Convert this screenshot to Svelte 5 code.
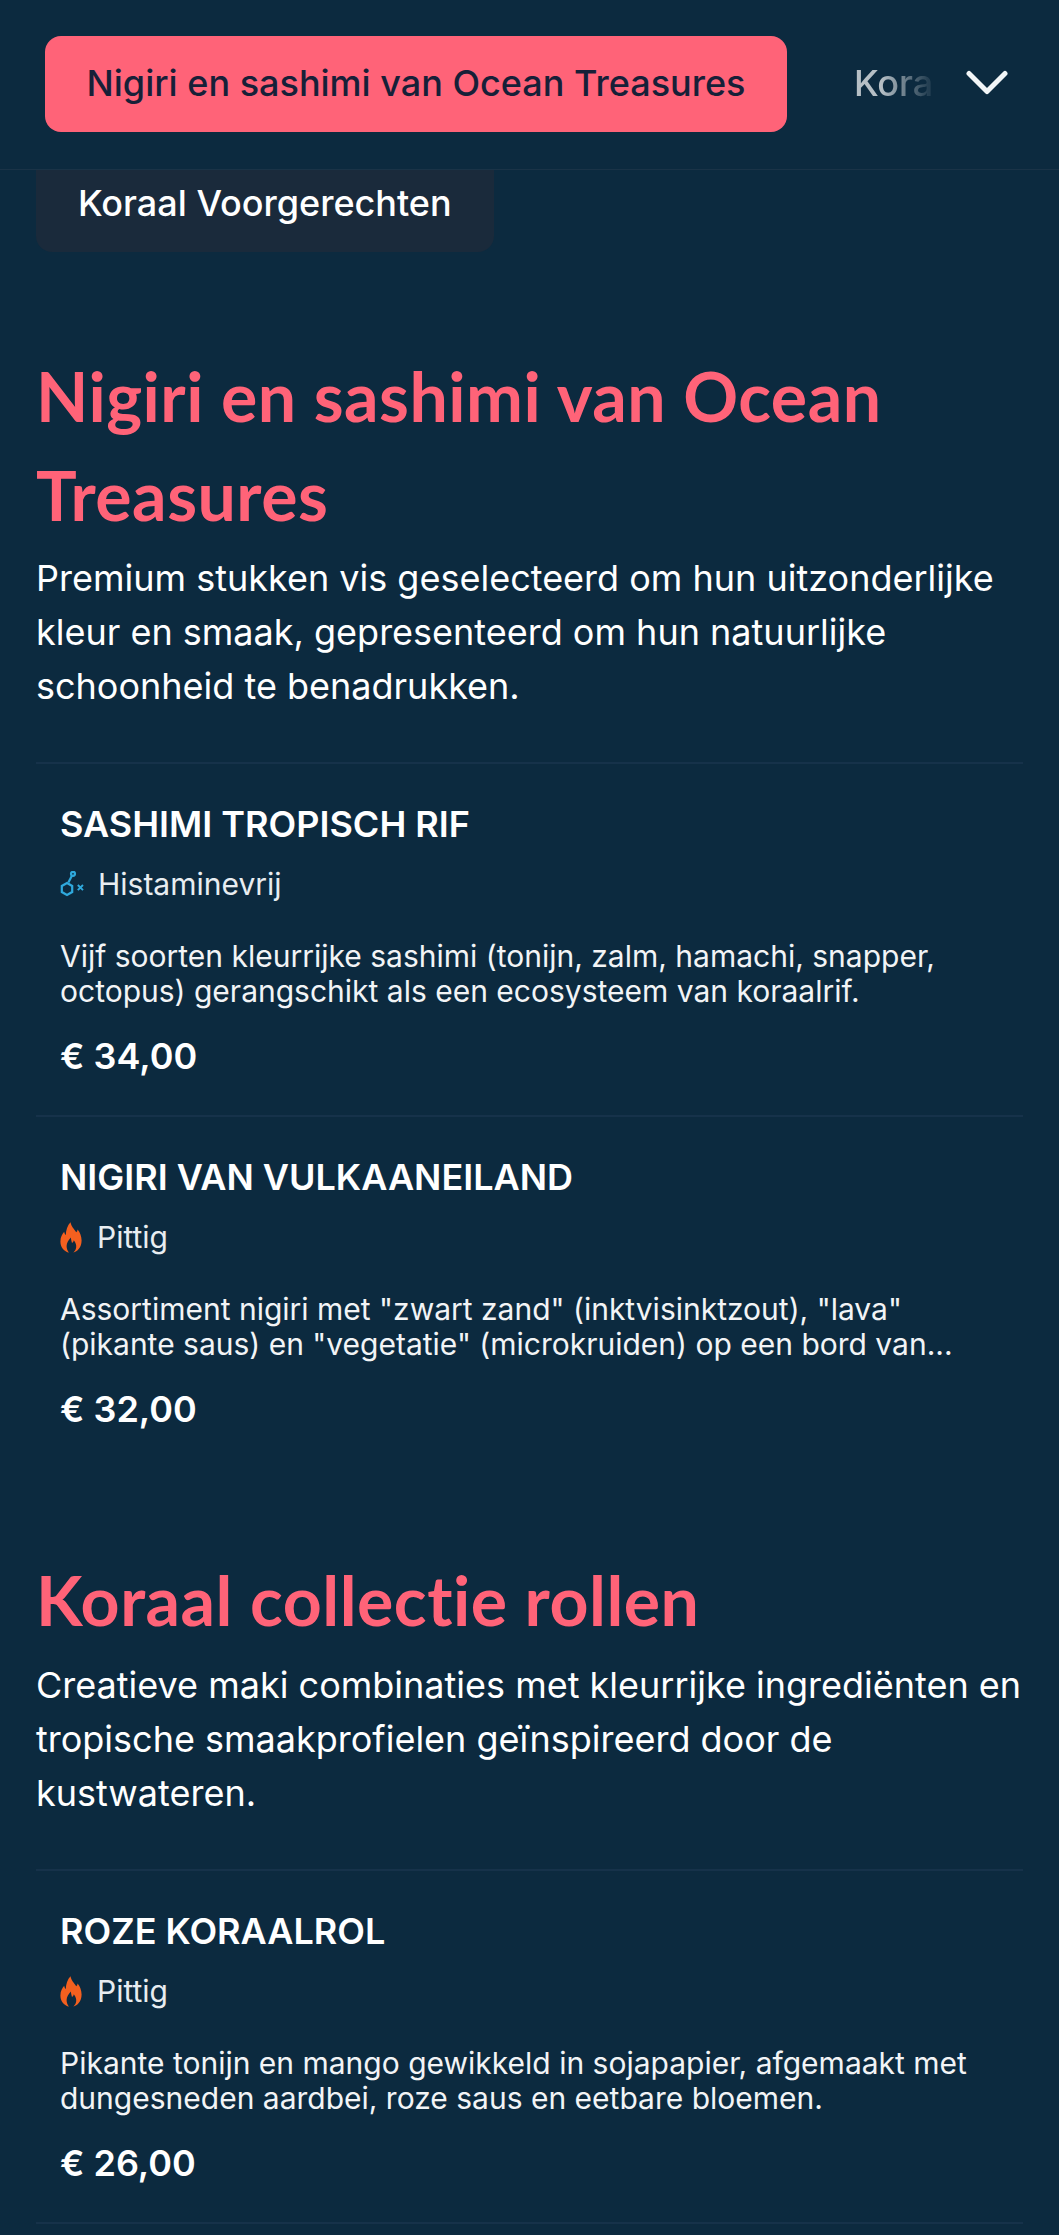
<script lang="ts">
  interface Dish {
    name: string;
    tag: 'spicy' | 'histamine';
    tagLabel: string;
    desc: string[];
    price: string;
    last?: boolean;
  }

  interface Section {
    title: string;
    intro: string[];
    dishes: Dish[];
  }

  const sections: Section[] = [
    {
      title: 'Nigiri en sashimi van Ocean Treasures',
      intro: [
        'Premium stukken vis geselecteerd om hun uitzonderlijke',
        'kleur en smaak, gepresenteerd om hun natuurlijke',
        'schoonheid te benadrukken.'
      ],
      dishes: [
        {
          name: 'SASHIMI TROPISCH RIF',
          tag: 'histamine',
          tagLabel: 'Histaminevrij',
          desc: [
            'Vijf soorten kleurrijke sashimi (tonijn, zalm, hamachi, snapper,',
            'octopus) gerangschikt als een ecosysteem van koraalrif.'
          ],
          price: '€ 34,00'
        },
        {
          name: 'NIGIRI VAN VULKAANEILAND',
          tag: 'spicy',
          tagLabel: 'Pittig',
          desc: [
            'Assortiment nigiri met "zwart zand" (inktvisinktzout), "lava"',
            '(pikante saus) en "vegetatie" (microkruiden) op een bord van...'
          ],
          price: '€ 32,00',
          last: true
        }
      ]
    },
    {
      title: 'Koraal collectie rollen',
      intro: [
        'Creatieve maki combinaties met kleurrijke ingrediënten en',
        'tropische smaakprofielen geïnspireerd door de',
        'kustwateren.'
      ],
      dishes: [
        {
          name: 'ROZE KORAALROL',
          tag: 'spicy',
          tagLabel: 'Pittig',
          desc: [
            'Pikante tonijn en mango gewikkeld in sojapapier, afgemaakt met',
            'dungesneden aardbei, roze saus en eetbare bloemen.'
          ],
          price: '€ 26,00'
        }
      ]
    }
  ];
</script>

<div class="page">
  <header class="tabs">
    <div class="tab active">Nigiri en sashimi van Ocean Treasures</div>
    <div class="tab next">Kora</div>
    <svg class="chevron" viewBox="0 0 42 25" width="42" height="25" fill="none" stroke="#f2f5f7" stroke-width="5" stroke-linecap="round" stroke-linejoin="round">
      <path d="M3 3.5 L21 21.5 L39 3.5" />
    </svg>
  </header>

  <div class="chip">Koraal Voorgerechten</div>

  {#each sections as section, i}
    <section class="section" class:first={i === 0}>
      <h2>{section.title}</h2>
      <p class="intro">
        {#each section.intro as line}<span>{line}</span>{/each}
      </p>
      <div class="dishes">
        {#each section.dishes as dish}
          <article class="dish" class:last={dish.last}>
            <h3>{dish.name}</h3>
            <div class="tag">
              {#if dish.tag === 'spicy'}
                <svg class="icon" viewBox="0 0 27 31" width="27" height="31">
                  <path fill="#f4601f" d="M10.5 0.3 C11.3 4.8 14.2 7 16.2 10.3 C17 9.6 17.5 8.6 17.6 7.4 C20 10.2 21.6 14 21.6 18.6 C21.6 25.6 17.2 29.8 13.4 30.6 C15.4 28.6 16.4 26.4 16.2 23.8 C16 21.4 15 19.8 13.8 18.2 C13.5 19.6 12.9 20.4 12 21 C11.4 18.6 11 16.8 10.8 15.4 C8.6 18 6.6 20.6 6.6 24 C6.6 26.6 7.4 28.8 9 30.6 C4.4 29.6 0.4 25.4 0.4 19.4 C0.4 15 2.4 12 4.2 9.8 C4.4 11.2 5 12.4 5.8 13 C5.8 8.2 7.6 3.4 10.5 0.3 Z" />
                </svg>
              {:else}
                <svg class="icon" viewBox="0 0 28 26" width="28" height="26" fill="none" stroke="#2fa9dd" stroke-width="2.2">
                  <circle cx="13" cy="2.8" r="2" />
                  <path d="M12 4.6 L8.4 11.4" />
                  <path d="M7 12 L12.2 15 L12.2 21 L7 24 L1.8 21 L1.8 15 Z" />
                  <path d="M17.8 14 L23 19.2 M23 14 L17.8 19.2" stroke-width="1.9" />
                </svg>
              {/if}
              <span>{dish.tagLabel}</span>
            </div>
            <p class="desc">
              {#each dish.desc as line}<span>{line}</span>{/each}
            </p>
            <div class="price">{dish.price}</div>
          </article>
        {/each}
      </div>
    </section>
  {/each}
</div>

<style>
  :global(body) {
    margin: 0;
    background: #0c2a3f;
  }

  .page {
    height: 2235px;
    overflow: hidden;
    background: #0c2a3f;
    color: #fff;
    font-family: Inter, "Liberation Sans", sans-serif;
  }

  .tabs {
    height: 169px;
    display: flex;
    align-items: center;
    padding: 0 45px;
    border-bottom: 1px solid #1a3347;
  }

  .tab {
    font-size: 36px;
    font-weight: 500;
    white-space: nowrap;
  }

  .tab.active {
    box-sizing: border-box;
    width: 742px;
    height: 96px;
    margin-top: -2px;
    line-height: 94px;
    text-align: center;
    background: #ff6378;
    color: #172038;
    border-radius: 16px;
  }

  .tab.next {
    width: 78px;
    margin-left: 67px;
    margin-top: -4px;
    overflow: hidden;
    -webkit-mask-image: linear-gradient(to right, rgba(0, 0, 0, 0.7) 35%, rgba(0, 0, 0, 0.1) 95%);
    mask-image: linear-gradient(to right, rgba(0, 0, 0, 0.7) 35%, rgba(0, 0, 0, 0.1) 95%);
  }

  .chevron {
    margin-left: 34px;
    margin-top: -4px;
  }

  .chip {
    box-sizing: border-box;
    width: 458px;
    height: 82px;
    margin-left: 36px;
    padding: 5px 0 0 42px;
    background: #1a2a3b;
    border-radius: 0 0 16px 16px;
    font-size: 36px;
    font-weight: 500;
    line-height: 56px;
  }

  .section {
    padding: 0 36px;
    margin-top: 88px;
  }

  .section.first {
    margin-top: 94px;
  }

  h2 {
    margin: 0;
    font-family: Lato, sans-serif;
    font-size: 68px;
    font-weight: 700;
    letter-spacing: 0.5px;
    line-height: 99px;
    color: #ff6378;
  }

  .intro {
    margin: 7px 0 0;
    font-size: 36px;
    line-height: 54px;
  }

  .section:not(.first) .intro {
    margin-top: 9px;
  }

  .intro span,
  .desc span {
    display: block;
    white-space: nowrap;
  }

  .dishes {
    margin-top: 49px;
    border-top: 2px solid #16324a;
  }

  .dish {
    height: 353px;
    box-sizing: border-box;
    padding: 35px 24px 0;
    border-bottom: 2px solid #16324a;
  }

  .dish.last {
    border-bottom: 0;
    height: 345px;
  }

  h3 {
    margin: 0;
    font-size: 36px;
    font-weight: 600;
    line-height: 50px;
  }

  .tag {
    display: flex;
    align-items: center;
    gap: 10px;
    height: 40px;
    margin-top: 15px;
    font-size: 30px;
    color: #e8edf1;
  }

  .icon {
    flex: none;
  }

  .desc {
    margin: 35px 0 0;
    font-size: 30px;
    line-height: 35px;
    color: #f2f4f6;
  }

  .price {
    margin-top: 22px;
    font-size: 36px;
    font-weight: 600;
    line-height: 50px;
  }
</style>
